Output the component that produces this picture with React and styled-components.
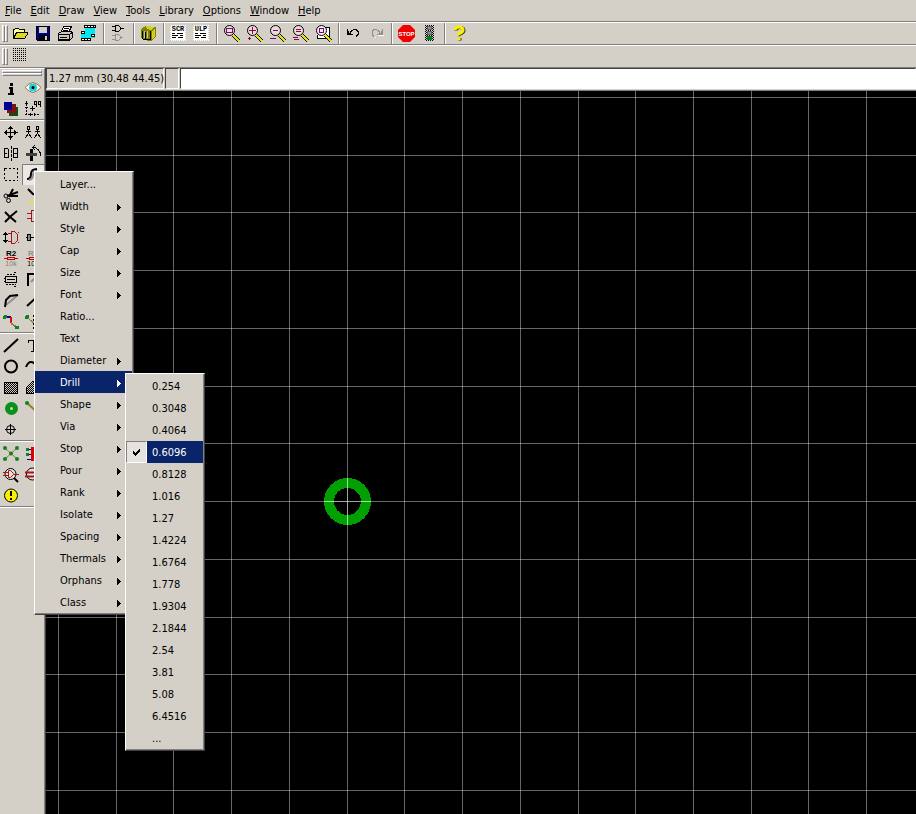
import React from 'react';
import styled, { createGlobalStyle, css, ThemeProvider } from 'styled-components';

const theme = {
    face: '#d4d0c8',
    light: '#ffffff',
    shadow: '#808080',
    dark: '#404040',
    select: '#0a246a',
    font: '"DejaVu Sans Condensed", "Liberation Sans", sans-serif',
    fontSize: '11px',
};

const GlobalStyle = createGlobalStyle`
    *, *::before, *::after {
        box-sizing: border-box;
    }

    body {
        margin: 0;
        background: #000;
    }

    button, input {
        font: inherit;
        color: inherit;
        margin: 0;
        padding: 0;
        border: 0;
        border-radius: 0;
        background: none;
    }
`;

const Window = styled.div`
    position: relative;
    display: flex;
    flex-direction: column;
    min-height: 100vh;
    overflow: hidden;
    background: ${(p) => p.theme.face};
    color: #000;
    font-family: ${(p) => p.theme.font};
    font-size: ${(p) => p.theme.fontSize};
    line-height: 14px;
`;

const MenuBar = styled.nav`
    display: flex;
    gap: 9px;
    height: 21px;
    padding: 0 5px;
`;

const MenuBarItem = styled.button`
    &::first-letter {
        text-decoration: underline;
    }
`;

const ToolBar = styled.div`
    display: flex;
    height: 23px;
    padding-left: 2px;
    border-top: 1px solid ${(p) => p.theme.shadow};
    box-shadow: inset 0 1px 0 ${(p) => p.theme.light};
`;

const raised = css`
    border: 1px solid;
    border-color: ${(p) => p.theme.light} ${(p) => p.theme.shadow} ${(p) => p.theme.shadow} ${(p) => p.theme.light};
`;

const Grip = styled.div`
    display: flex;
    flex-direction: ${(p) => (p.$flat ? 'column' : 'row')};
    margin: ${(p) => (p.$flat ? '1px 2px 0' : '3px 0 2px')};

    &::before, &::after {
        content: '';
        flex: none;
        width: ${(p) => (p.$flat ? 'auto' : '3px')};
        height: ${(p) => (p.$flat ? '3px' : 'auto')};
        ${raised}
    }
`;

const ToolButton = styled.button`
    display: flex;
    flex: none;
    width: 23px;
    padding: 3px;
`;

const Separator = styled.div`
    flex: none;
    width: 2px;
    margin: 1px 2px 0 3px;
    border-left: 1px solid ${(p) => p.theme.shadow};
    border-right: 1px solid ${(p) => p.theme.light};
`;

const Workspace = styled.div`
    display: flex;
    flex: 1;
    border-top: 1px solid ${(p) => p.theme.shadow};
`;

const Palette = styled.aside`
    flex: none;
    width: 45px;
    border-top: 1px solid ${(p) => p.theme.light};
    border-right: 1px solid ${(p) => p.theme.shadow};
`;

const PaletteGroup = styled.div`
    display: grid;
    grid-template-columns: 22px 22px;
    grid-auto-rows: 21px;
    padding-top: 1px;
    margin-bottom: 1px;
    border-bottom: 1px solid ${(p) => p.theme.shadow};
    box-shadow: 0 1px 0 ${(p) => p.theme.light};
`;

const PaletteButton = styled.button`
    display: flex;
    padding: 2px;
    ${(p) => p.$pressed && css`
        background: #ece9e4;
        box-shadow: inset 1px 1px 0 ${p.theme.shadow};
    `}
`;

const Editor = styled.main`
    display: flex;
    flex: 1;
    flex-direction: column;
    min-width: 0;
    border-left: 1px solid ${(p) => p.theme.dark};
`;

const StatusRow = styled.div`
    display: flex;
    gap: 1px;
    height: 23px;
    padding-bottom: 1px;
    border-bottom: 1px solid ${(p) => p.theme.shadow};
`;

const sunken = css`
    border: 1px solid;
    border-color: ${(p) => p.theme.dark} ${(p) => p.theme.light} ${(p) => p.theme.light} ${(p) => p.theme.dark};
`;

const Coordinates = styled.output`
    width: 118px;
    padding: 3px 2px;
    white-space: nowrap;
    ${sunken}
`;

const StatusCell = styled.div`
    width: 14px;
    ${sunken}
`;

const CommandLine = styled.input`
    flex: 1;
    min-width: 0;
    padding: 0 4px;
    background: #fff;
    outline: none;

    && {
        background: #fff;
        ${sunken}
    }
`;

const Board = styled.svg`
    flex: 1;
    width: 100%;
    min-height: 0;
    background: #000;
`;

const Popup = styled.ul`
    position: absolute;
    z-index: 1;
    left: ${(p) => (p.$nested ? 'calc(100% - 7px)' : '34px')};
    top: ${(p) => (p.$nested ? '2px' : '171px')};
    width: ${(p) => (p.$nested ? '80px' : '100px')};
    margin: 0;
    padding: 1px 1px 1px 0;
    list-style: none;
    color: #000;
    background: ${(p) => p.theme.face};
    border: 1px solid;
    border-color: ${(p) => p.theme.light} ${(p) => p.theme.dark} ${(p) => p.theme.dark} ${(p) => p.theme.light};
    box-shadow: inset -1px -1px 0 ${(p) => p.theme.shadow};
`;

const PopupRow = styled.li`
    position: relative;
    display: flex;
    height: 22px;
`;

const PopupItem = styled.button`
    display: flex;
    flex: 1;
    align-items: center;
    justify-content: space-between;
    padding: 2px 11px 0 ${(p) => (p.$checkable ? '5px' : '25px')};
    text-align: left;
    ${(p) => p.$selected && css`
        && {
            color: #fff;
            background: ${p.theme.select};
        }
    `}
`;

const CheckColumn = styled.span`
    display: flex;
    align-items: center;
    justify-content: center;
    width: 21px;
    ${(p) => p.$checked && css`
        border: 1px solid;
        border-color: ${p.theme.shadow} ${p.theme.light} ${p.theme.light} ${p.theme.shadow};
        background: #e6e3de;
    `}
`;

const Arrow = () => (
    <svg width="4" height="7" viewBox="0 0 4 7" fill="currentColor" shapeRendering="crispEdges">
        <path d="M0 0h1v1h1v1h1v1h1v1h-1v1h-1v1h-1v1h-1z" />
    </svg>
);

const Check = () => (
    <svg width="7" height="7" viewBox="0 0 7 7" shapeRendering="crispEdges">
        <path d="M0 2h1v1h1v1h1v-1h1v-1h1v-1h1v-1h1v3h-1v1h-1v1h-1v1h-1v1h-1v-1h-1v-1h-1z" />
    </svg>
);

const ToolIcon = ({ children }) => (
    <svg width="17" height="17" viewBox="0 0 17 17" fill="none" stroke="#000" shapeRendering="crispEdges">
        {children}
    </svg>
);

const PaletteIcon = ({ children, smooth }) => (
    <svg width="18" height="17" viewBox="0 0 18 17" fill="none" stroke="#000" shapeRendering={smooth ? 'auto' : 'crispEdges'}>
        {children}
    </svg>
);

const Patterns = () => (
    <svg width="0" height="0" style={{ position: 'absolute' }} aria-hidden="true">
        <pattern id="hatch" width="2" height="2" patternUnits="userSpaceOnUse">
            <rect width="2" height="2" fill="#d4d0c8" />
            <path d="M0 0h1v1h-1zM1 1h1v1h-1z" fill="#000" />
        </pattern>
    </svg>
);

const Magnifier = ({ children }) => (
    <ToolIcon>
        <circle cx="6.5" cy="5.5" r="5" fill="#eadcd8" shapeRendering="auto" />
        <path d="M11 9l6 6M9 11l6 6" shapeRendering="auto" />
        <path d="M10 10l6 6" stroke="#e8e000" strokeWidth="2" shapeRendering="auto" />
        {children}
    </ToolIcon>
);

const ScriptSheet = ({ name }) => (
    <ToolIcon>
        <rect x="1" y="1" width="14" height="14" fill="#fff" stroke="none" />
        <rect x="0.500" y="0.500" width="15" height="15" stroke="#fff" strokeDasharray="1 1" />
        <text x="8" y="6" fontSize="7" fontWeight="bold" fontFamily="Liberation Mono, monospace" textAnchor="middle" fill="#000" stroke="none">{name}</text>
        <path d="M2 8.500h3M7 8.500h6M2 10.500h6M10 10.500h3M2 12.500h4M8 12.500h5" />
    </ToolIcon>
);

const toolGroups = [
    [
        {
            label: 'Open',
            icon: (
                <ToolIcon>
                    <path d="M2.500 13.500v-9h1l1-1h3l1 1h5v3" fill="#ffffa0" />
                    <path d="M2.500 13.500l3-6h12l-4 6z" fill="#e0d820" />
                </ToolIcon>
            ),
        },
        {
            label: 'Save',
            icon: (
                <ToolIcon>
                    <path d="M2.500 1.500h13v14h-12l-1-1z" fill="#000090" />
                    <rect x="5" y="2" width="8" height="6" fill="#d4d0c8" stroke="none" />
                    <rect x="5" y="10" width="9" height="5" fill="#000" stroke="none" />
                    <rect x="11" y="11" width="2" height="4" fill="#d4d0c8" stroke="none" />
                </ToolIcon>
            ),
        },
        {
            label: 'Print',
            icon: (
                <ToolIcon>
                    <path d="M4.500 6.500l2-5h8l-3 6z" fill="#fff" />
                    <path d="M7 3.500h5M6 5.500h5" />
                    <path d="M1.500 8.500l3-2h9l2 1v5l-3 3h-11z" fill="#c8c8c8" />
                    <path d="M1.500 9.500h11v6M12.500 9.500l3-2M3 12.500h7M2 14.500h10" />
                    <rect x="8" y="11" width="3" height="1" fill="#e0d820" stroke="none" />
                </ToolIcon>
            ),
        },
        {
            label: 'Board',
            icon: (
                <ToolIcon>
                    <path d="M5 3h10v10h-4v2h-10v-9h4z" fill="#00e8f0" stroke="none" />
                    <path d="M4 0h12v3h-12zM1 13h10v3h-10zM1 6h4v3h-4zM11 9h4v3h-4z" fill="#000" stroke="none" />
                    <path d="M5 1.500h10M2 14.500h9M2 7.500h2M12 10.500h2" stroke="#fff" strokeDasharray="2 1" />
                </ToolIcon>
            ),
        },
    ],
    [
        {
            label: 'Use gate',
            icon: (
                <ToolIcon>
                    <path d="M5.500 .500h3l2 2v2l-2 2h-3zM2 1.500h3M2 5.500h3M11 3.500h3" />
                    <path d="M5.500 9.500h3l2 2v2l-2 2h-3zM2 10.500h3M2 14.500h3M11 12.500h2" stroke="#909090" />
                </ToolIcon>
            ),
        },
    ],
    [
        {
            label: 'Library',
            icon: (
                <ToolIcon>
                    <path d="M1 4l5-3 10 1v9l-5 5-8-1-2-3z" fill="#808000" stroke="none" />
                    <path d="M6 1l9 1-4 3-4-1zM12 6l3-3v8l-3 3z" fill="#d0d020" stroke="none" />
                    <path d="M2.500 6v8M5.500 7v8M10.500 6v9M3 14.500h7" />
                    <path d="M4.500 6v7M7.500 6v7" stroke="#c8c890" />
                </ToolIcon>
            ),
        },
    ],
    [
        { label: 'Script', icon: <ScriptSheet name="SCR" /> },
        { label: 'ULP', icon: <ScriptSheet name="ULP" /> },
    ],
    [
        { label: 'Fit', icon: <Magnifier><rect x="3.500" y="3.500" width="6" height="4" stroke="#800080" /></Magnifier> },
        { label: 'Zoom in', icon: <Magnifier><path d="M3 5.500h7M6.500 2v7M2 13.500h3M3.500 12v3" stroke="#900050" /></Magnifier> },
        { label: 'Zoom out', icon: <Magnifier><path d="M4 5.500h5M1 13.500h6" stroke="#800080" /></Magnifier> },
        { label: 'Redraw', icon: <Magnifier><path d="M4 4.500h5M4 6.500h5M1 12.500h5M2 14.500h5" stroke="#900050" /></Magnifier> },
        {
            label: 'Select',
            icon: (
                <ToolIcon>
                    <path d="M4.500 2.500h10v11h-12v-4" fill="#fff" />
                    <circle cx="6.5" cy="5.5" r="5" fill="#f4ecec" shapeRendering="auto" />
                    <rect x="4.500" y="3.500" width="4" height="4" stroke="#800080" />
                    <path d="M9 11l6 6M11 9l6 6" shapeRendering="auto" />
                    <path d="M10 10l6 6" stroke="#e8e000" strokeWidth="2" shapeRendering="auto" />
                </ToolIcon>
            ),
        },
    ],
    [
        {
            label: 'Undo',
            icon: (
                <ToolIcon>
                    <path d="M2 4v6h6v-1h-2v-1h-2v-2h-1v-2z" fill="#000" stroke="none" />
                    <path d="M5 7.500l2-2 2-1h2l2 2v3l-2 2" />
                </ToolIcon>
            ),
        },
        {
            label: 'Redo',
            icon: (
                <ToolIcon>
                    <path d="M15 4v6h-6v-1h2v-1h2v-2h1v-2z" fill="#909090" stroke="none" />
                    <path d="M12 7.500l-2-2-2-1h-2l-2 2v3l2 2" stroke="#909090" />
                    <path d="M10 10.500h6M7 12.500h1" stroke="#fff" />
                </ToolIcon>
            ),
        },
    ],
    [
        {
            label: 'Stop',
            icon: (
                <ToolIcon>
                    <path d="M5 0h7l5 5v7l-5 5h-7l-5-5v-7z" fill="#f00000" stroke="none" shapeRendering="auto" />
                    <text x="8.500" y="11" fontSize="6" fontWeight="bold" fontFamily="Liberation Sans, sans-serif" textAnchor="middle" fill="#fff" stroke="none">STOP</text>
                </ToolIcon>
            ),
        },
        {
            label: 'Go',
            icon: (
                <ToolIcon>
                    <rect x="4" y="0" width="9" height="16" fill="url(#hatch)" stroke="none" />
                    <circle cx="8.5" cy="3" r="2" fill="#909090" stroke="#606060" />
                    <circle cx="8.5" cy="8" r="2" fill="#909090" stroke="#606060" />
                    <circle cx="8.5" cy="13" r="2.5" fill="#008020" stroke="none" />
                </ToolIcon>
            ),
        },
    ],
    [
        {
            label: 'Help',
            icon: (
                <ToolIcon>
                    <g strokeWidth="3" shapeRendering="auto">
                        <path d="M5 5.500q0-3 4-3t4 3q0 2-2.500 3t-1.500 2.500M9 13v2.500" stroke="#404000" />
                        <path d="M4 5q0-3 4-3t4 3q0 2-2.500 3t-1.500 2.500M8 12.500v2.500" stroke="#f8f000" />
                    </g>
                </ToolIcon>
            ),
        },
    ],
];

const GridDots = () => (
    <ToolIcon>
        {[0, 2, 4, 6, 8, 10, 12].map((y) => (
            <path key={y} d={`M2 ${y}.500h14`} strokeDasharray="1 1" />
        ))}
    </ToolIcon>
);

const redGate = <path d="M7.500 2.500h4l3 3v5l-3 3h-4zM3 5.500h4M3 10.500h4M15 8.500h3" stroke="#a01818" />;

const ResistorLabel = ({ active }) => (
    <PaletteIcon>
        <text x="9" y="6" fontSize="8" fontWeight="bold" fontFamily="Liberation Sans, sans-serif" textAnchor="middle" fill={active === 'name' ? '#000' : '#909090'} stroke="none">R2</text>
        <path d="M2 8.500h3M13 8.500h3M5.500 7.500h7v2h-7z" stroke="#c00000" />
        <text x="9" y="16" fontSize="7" fontFamily="Liberation Sans, sans-serif" textAnchor="middle" fill={active === 'value' ? '#000' : '#808080'} stroke="none">10k</text>
    </PaletteIcon>
);

const paletteGroups = [
    [
        {
            label: 'Info',
            icon: (
                <PaletteIcon>
                    <path d="M8 4h3v3h-3zM7 8h4v6h1v2h-6v-2h2v-4h-1z" fill="#000" stroke="none" />
                </PaletteIcon>
            ),
        },
        {
            label: 'Show',
            icon: (
                <PaletteIcon smooth>
                    <path d="M1 8.500l4-3.500 4-1.500 4 1.500 4 3.500-4 3.500-4 1.500-4-1.500z" fill="#fff" stroke="#a07830" />
                    <circle cx="9" cy="8.5" r="4" fill="#20d0e0" stroke="none" />
                    <circle cx="9" cy="8.5" r="1.5" fill="#000" stroke="none" />
                </PaletteIcon>
            ),
        },
        {
            label: 'Display',
            icon: (
                <PaletteIcon>
                    <rect x="7" y="7" width="9" height="9" fill="#105010" stroke="none" />
                    <rect x="5" y="4" width="9" height="9" fill="#801010" stroke="none" />
                    <rect x="2" y="2" width="8" height="8" fill="#000090" stroke="none" />
                </PaletteIcon>
            ),
        },
        {
            label: 'Mark',
            icon: (
                <PaletteIcon>
                    <path d="M2.500 1v14M1 14.500h15" strokeDasharray="2 1" />
                    <path d="M1 3.500h3M1 7.500h3M6.500 13v3M10.500 13v3M6 8.500h5M8.500 6v5" />
                    <path d="M10.500 1.500h2v3h-2zM14.500 1.500h2v3h-2zM12.500 5v2M16.500 5v2" />
                </PaletteIcon>
            ),
        },
    ],
    [
        {
            label: 'Move',
            icon: (
                <PaletteIcon>
                    <path d="M2 8.500h14M8.500 2v14M7 3.500h3M6 4.500h5M7 13.500h3M6 12.500h5M3.500 7v3M4.500 6v5M13.500 7v3M12.500 6v5" />
                </PaletteIcon>
            ),
        },
        {
            label: 'Copy',
            icon: (
                <PaletteIcon>
                    <path d="M3.500 2.500h2v3h-2zM12.500 2.500h2v3h-2zM4.500 6v4M13.500 6v4M2 7.500h5M11 7.500h5" />
                    <path d="M4.500 9l-3 5M4.500 9l3 5M13.500 9l-3 5M13.500 9l3 5" />
                </PaletteIcon>
            ),
        },
        {
            label: 'Mirror',
            icon: (
                <PaletteIcon>
                    <path d="M6 3.500h-4M6 12.500h-4M2.500 3v10M2 8.500h3M6.500 4v9M11 3.500h4M11 12.500h4M15.500 3v10M12 8.500h3M11.500 4v9" />
                    <path d="M9.500 1v15" strokeDasharray="3 1" />
                </PaletteIcon>
            ),
        },
        {
            label: 'Rotate',
            icon: (
                <PaletteIcon>
                    <rect x="6" y="4" width="3" height="12" fill="#000" stroke="none" />
                    <rect x="2" y="8" width="11" height="3" fill="#404040" stroke="none" />
                    <path d="M8 2.500h3l3 2 2 3v3M11 5l-3-3M11 .500l-3 2" />
                </PaletteIcon>
            ),
        },
        { label: 'Group', icon: <PaletteIcon><rect x="2.500" y="2.500" width="13" height="12" strokeDasharray="2 2" /></PaletteIcon> },
        {
            label: 'Change',
            pressed: true,
            icon: (
                <PaletteIcon smooth>
                    <path d="M3 13q4 0 4-5t6-5" strokeWidth="2" />
                    <path d="M5 14q4-1 4-5t4-4" stroke="#909090" strokeWidth="2" />
                </PaletteIcon>
            ),
        },
        {
            label: 'Cut',
            icon: (
                <PaletteIcon smooth>
                    <path d="M5 9l11-4M7 10l4-8M7 9h9" strokeWidth="2" />
                    <circle cx="4" cy="9" r="2" />
                    <circle cx="6.5" cy="13.5" r="2" />
                </PaletteIcon>
            ),
        },
        {
            label: 'Paste',
            icon: (
                <PaletteIcon smooth>
                    <path d="M4 2l5 5 7 2" strokeWidth="2" />
                    <path d="M5 15h12" stroke="#e8e020" strokeWidth="2" />
                </PaletteIcon>
            ),
        },
        { label: 'Delete', icon: <PaletteIcon smooth><path d="M3 4l4 4 7 6M15 3l-6 5-6 6" strokeWidth="2" /></PaletteIcon> },
        { label: 'Add', icon: <PaletteIcon>{redGate}</PaletteIcon> },
        {
            label: 'Pinswap',
            icon: (
                <PaletteIcon>
                    <path d="M3.500 3v11M2 4.500h3M1 5.500h5M2 12.500h3M1 11.500h5" />
                    <path d="M9.500 2.500h3l3 3v6l-3 3h-3zM6 4.500h3M6 12.500h3M16 3.500h1M16 13.500h1" stroke="#a01818" />
                </PaletteIcon>
            ),
        },
        {
            label: 'Replace',
            icon: (
                <PaletteIcon>
                    <rect x="3.500" y="5.500" width="3" height="6" fill="#809080" />
                    <path d="M2 8.500h1M7 8.500h10" />
                </PaletteIcon>
            ),
        },
        { label: 'Name', icon: <ResistorLabel active="name" /> },
        { label: 'Value', icon: <ResistorLabel active="value" /> },
        {
            label: 'Smash',
            icon: (
                <PaletteIcon>
                    <path d="M3.500 5.500h11v6h-11zM5 8.500h8" />
                    <path d="M5 3.500h9M4 13.500h10" strokeDasharray="2 1" />
                    <path d="M2 7.500h1M2 10.500h1M12 1.500h2M12 15.500h2" />
                </PaletteIcon>
            ),
        },
        {
            label: 'Miter',
            icon: (
                <PaletteIcon smooth>
                    <path d="M4 15v-12h12" strokeWidth="2" />
                    <path d="M7 11l7-7" stroke="#909090" strokeWidth="2" />
                </PaletteIcon>
            ),
        },
        {
            label: 'Split',
            icon: (
                <PaletteIcon smooth>
                    <path d="M4 13l12-10" stroke="#909090" strokeWidth="2" />
                    <path d="M3 15l1-7 4-4 8-1" strokeWidth="2" />
                </PaletteIcon>
            ),
        },
        { label: 'Optimize', icon: <PaletteIcon smooth><path d="M3 14l12-11" strokeWidth="2" /></PaletteIcon> },
        {
            label: 'Route',
            icon: (
                <PaletteIcon>
                    <path d="M3 4h6" stroke="#0000c0" strokeWidth="2" />
                    <path d="M9 4v6" stroke="#f00000" strokeWidth="2" />
                    <path d="M9 10l5 4" stroke="#908030" strokeWidth="2" />
                    <circle cx="3" cy="4" r="2" fill="#108020" stroke="none" />
                    <circle cx="15" cy="14.5" r="2" fill="#108020" stroke="none" />
                </PaletteIcon>
            ),
        },
        {
            label: 'Ripup',
            icon: (
                <PaletteIcon>
                    <path d="M3 4l11 10" stroke="#908030" />
                    <path d="M9 2v14" strokeDasharray="2 2" />
                    <circle cx="3" cy="4" r="2" fill="#108020" stroke="none" />
                </PaletteIcon>
            ),
        },
    ],
    [
        { label: 'Wire', icon: <PaletteIcon smooth><path d="M2 15l14-13" strokeWidth="2" /></PaletteIcon> },
        {
            label: 'Text',
            icon: (
                <PaletteIcon>
                    <path d="M4 3.500h11M4.500 3v3M14.500 3v3M9 3v12M7 14.500h5" />
                </PaletteIcon>
            ),
        },
        { label: 'Circle', icon: <PaletteIcon smooth><circle cx="9" cy="8.5" r="6" strokeWidth="2" /></PaletteIcon> },
        { label: 'Arc', icon: <PaletteIcon smooth><path d="M2 9q4-10 12 0" strokeWidth="2" /></PaletteIcon> },
        { label: 'Rect', icon: <PaletteIcon><rect x="2.500" y="3.500" width="13" height="11" fill="url(#hatch)" /></PaletteIcon> },
        { label: 'Polygon', icon: <PaletteIcon><path d="M2.500 14.500v-6l6-6h7v12z" fill="url(#hatch)" /></PaletteIcon> },
        {
            label: 'Via',
            icon: (
                <PaletteIcon smooth>
                    <circle cx="9.5" cy="8.5" r="6.5" fill="#089018" stroke="none" />
                    <circle cx="9.5" cy="8.5" r="1.5" fill="#c8d8b8" stroke="none" />
                </PaletteIcon>
            ),
        },
        {
            label: 'Signal',
            icon: (
                <PaletteIcon smooth>
                    <path d="M3 3l11 10" stroke="#908030" strokeWidth="2" />
                    <circle cx="3" cy="3" r="2" fill="#108020" stroke="none" />
                </PaletteIcon>
            ),
        },
        {
            label: 'Hole',
            icon: (
                <PaletteIcon smooth>
                    <circle cx="8.5" cy="8.5" r="4" />
                    <path d="M3 8.500h11M8.500 3v11" />
                </PaletteIcon>
            ),
        },
    ],
    [
        {
            label: 'Ratsnest',
            icon: (
                <PaletteIcon smooth>
                    <path d="M3 3l12 11M15 3l-12 11" stroke="#808030" />
                    {[[3, 3], [15, 3], [9, 8.5], [3, 14], [15, 14]].map(([x, y]) => (
                        <circle key={`${x}-${y}`} cx={x} cy={y} r="2" fill="#108020" stroke="none" />
                    ))}
                </PaletteIcon>
            ),
        },
        {
            label: 'Auto',
            icon: (
                <PaletteIcon>
                    <path d="M3 4.500h8M3 9.500h8M3 14.500h8" stroke="#0000c0" />
                    <path d="M8.500 2v14" stroke="#e00000" strokeWidth="3" />
                    <path d="M2 3h3v3h-3zM2 8h3v3h-3z" fill="#108020" stroke="none" />
                </PaletteIcon>
            ),
        },
        {
            label: 'ERC',
            icon: (
                <PaletteIcon smooth>
                    <circle cx="8.5" cy="8" r="5.5" fill="#e8dcd8" />
                    <path d="M6.500 4.500h2l3 3v1l-3 3h-2zM1 6.500h5M1 9.500h5M12 8.500h5" stroke="#a01818" />
                    <path d="M12 12l4 4" strokeWidth="2" />
                </PaletteIcon>
            ),
        },
        {
            label: 'DRC',
            icon: (
                <PaletteIcon smooth>
                    <circle cx="8.5" cy="8" r="6" fill="#e8dcd8" />
                    <path d="M1 6.500h14M1 10.500h14" stroke="#a01818" strokeWidth="2" />
                </PaletteIcon>
            ),
        },
        {
            label: 'Errors',
            icon: (
                <PaletteIcon smooth>
                    <circle cx="9" cy="8.5" r="6.5" fill="#f8f000" />
                    <path d="M9 4v5M9 11v2" strokeWidth="2" />
                </PaletteIcon>
            ),
        },
    ],
];

const changeMenu = [
    'Layer...', 'Width', 'Style', 'Cap', 'Size', 'Font', 'Ratio...', 'Text', 'Diameter', 'Drill',
    'Shape', 'Via', 'Stop', 'Pour', 'Rank', 'Isolate', 'Spacing', 'Thermals', 'Orphans', 'Class',
];

const plainItems = ['Layer...', 'Ratio...', 'Text'];

const drillSizes = [
    '0.254', '0.3048', '0.4064', '0.6096', '0.8128', '1.016', '1.27', '1.4224', '1.6764',
    '1.778', '1.9304', '2.1844', '2.54', '3.81', '5.08', '6.4516', '...',
];

const DrillMenu = ({ value }) => (
    <Popup $nested>
        {drillSizes.map((size) => (
            <PopupRow key={size}>
                <CheckColumn $checked={size === value}>{size === value && <Check />}</CheckColumn>
                <PopupItem $checkable $selected={size === value}>{size}</PopupItem>
            </PopupRow>
        ))}
    </Popup>
);

const ChangeMenu = ({ open }) => (
    <Popup>
        {changeMenu.map((name) => (
            <PopupRow key={name}>
                <PopupItem $selected={name === open}>
                    {name}
                    {!plainItems.includes(name) && <Arrow />}
                </PopupItem>
                {name === open && <DrillMenu value="0.6096" />}
            </PopupRow>
        ))}
    </Popup>
);

// 1.27 mm grid, rounded to whole pixels so every line stays one pixel wide
const gridLines = Array.from({ length: 40 }, (_, i) => Math.round(i * 57.73));

const BoardView = () => (
    <Board shapeRendering="crispEdges">
        <circle cx="301.5" cy="410.5" r="18.5" fill="none" stroke="#00a000" strokeWidth="10" />
        <g fill="#fff" fillOpacity="0.4">
            {gridLines.map((d) => <rect key={`v${d}`} x={d + 12} y="0" width="1" height="100%" />)}
            {gridLines.map((d) => <rect key={`h${d}`} x="0" y={d + 6} width="100%" height="1" />)}
        </g>
        <path d="M278 410.500h47M301.500 387v47" stroke="#fff" strokeOpacity="0.4" />
    </Board>
);

const App = function(){
    return(
        <ThemeProvider theme={theme}>
            <GlobalStyle />
            <Window>
                <Patterns />
                <MenuBar>
                    {['File', 'Edit', 'Draw', 'View', 'Tools', 'Library', 'Options', 'Window', 'Help'].map((name) => (
                        <MenuBarItem key={name}>{name}</MenuBarItem>
                    ))}
                </MenuBar>
                <ToolBar>
                    <Grip />
                    {toolGroups.map((group, i) => (
                        <React.Fragment key={group[0].label}>
                            {i > 0 && <Separator />}
                            {group.map((tool) => (
                                <ToolButton key={tool.label} aria-label={tool.label}>{tool.icon}</ToolButton>
                            ))}
                        </React.Fragment>
                    ))}
                </ToolBar>
                <ToolBar>
                    <Grip />
                    <ToolButton aria-label="Grid"><GridDots /></ToolButton>
                </ToolBar>
                <Workspace>
                    <Palette>
                        <Grip $flat />
                        {paletteGroups.map((group) => (
                            <PaletteGroup key={group[0].label}>
                                {group.map((tool) => (
                                    <PaletteButton key={tool.label} aria-label={tool.label} $pressed={tool.pressed}>
                                        {tool.icon}
                                    </PaletteButton>
                                ))}
                            </PaletteGroup>
                        ))}
                    </Palette>
                    <Editor>
                        <StatusRow>
                            <Coordinates>1.27 mm (30.48 44.45)</Coordinates>
                            <StatusCell />
                            <CommandLine aria-label="Command" />
                        </StatusRow>
                        <BoardView />
                    </Editor>
                </Workspace>
                <ChangeMenu open="Drill" />
            </Window>
        </ThemeProvider>
    );
}

export default App;
